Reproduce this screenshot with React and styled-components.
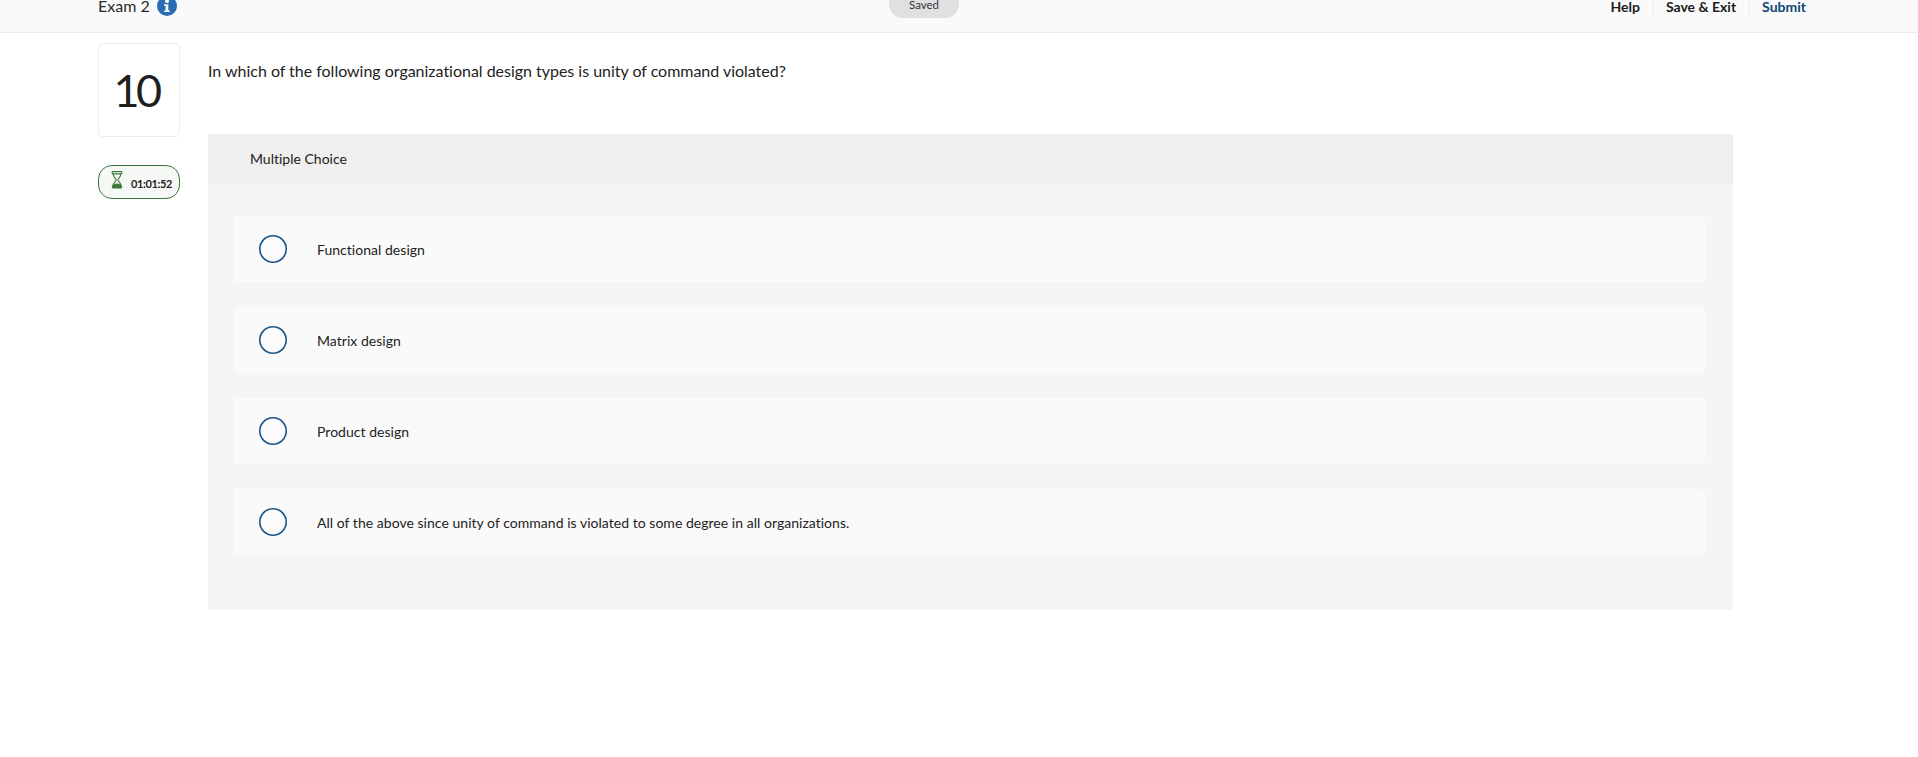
import styled, { createGlobalStyle } from "styled-components";

const GlobalStyle = createGlobalStyle`
  html, body {
    margin: 0;
    padding: 0;
    background: #fff;
    overflow: hidden;
  }
  body {
    font-family: "Lato", "Liberation Sans", sans-serif;
    font-variant-ligatures: none;
    color: #1f1f1f;
  }
`;

const choices = [
  "Functional design",
  "Matrix design",
  "Product design",
  "All of the above since unity of command is violated to some degree in all organizations.",
];

const InfoIcon = () => (
  <svg width="20" height="20" viewBox="0 0 20 20">
    <circle cx="10" cy="10" r="10" fill="#2a6db5" />
    <circle cx="10" cy="5.2" r="1.9" fill="#fff" />
    <path d="M7.2 8.2h4.1v6.2h1.4v1.7H7.2v-1.7h1.4V9.9H7.2z" fill="#fff" />
  </svg>
);

const HourglassIcon = () => (
  <svg width="12" height="18" viewBox="0 0 12 18" fill="none">
    <path
      d="M1.2 1.2c0-.4.2-.6.6-.6h8.4c.4 0 .6.2.6.6v1.1c0 .4-.2.6-.6.6H1.800c-.4 0-.6-.2-.6-.6z"
      stroke="#3a7a3a"
      strokeWidth="1.1"
    />
    <path
      d="M2.2 3c0 3.2 2.900 4.400 2.900 6s-3.400 3-3.400 6.600M9.800 3c0 3.200-2.900 4.400-2.900 6s3.400 3 3.400 6.600"
      stroke="#3a7a3a"
      strokeWidth="1.1"
    />
    <path
      d="M.8 15.600c.6-1.700 3-3.100 5.200-3.100s4.600 1.400 5.200 3.100c.2.900-.2 1.800-1.200 1.800H2c-1 0-1.400-.9-1.200-1.800z"
      fill="#3a7a3a"
    />
  </svg>
);

export default function App() {
  return (
    <>
      <GlobalStyle />
      <Header>
        <ExamTitle>
          <ExamName>Exam 2</ExamName>
          <InfoIcon />
        </ExamTitle>
        <SavedPill>Saved</SavedPill>
        <HeaderLinks>
          <HeaderLink>Help</HeaderLink>
          <HeaderLink>Save &amp; Exit</HeaderLink>
          <HeaderLink $primary>Submit</HeaderLink>
        </HeaderLinks>
      </Header>

      <Main>
        <Sidebar>
          <NumberBox>10</NumberBox>
          <Timer>
            <HourglassIcon />
            <TimerText>01:01:52</TimerText>
          </Timer>
        </Sidebar>

        <Content>
          <Question>
            In which of the following organizational design types is unity of command violated?
          </Question>
          <Panel>
            <PanelHead>Multiple Choice</PanelHead>
            <Choices>
              {choices.map((text) => (
                <Choice key={text}>
                  <Radio />
                  <span>{text}</span>
                </Choice>
              ))}
            </Choices>
          </Panel>
        </Content>
      </Main>
    </>
  );
}

const Header = styled.header`
  position: relative;
  margin-top: -20px;
  height: 52px;
  padding: 0 99px 0 98px;
  display: flex;
  justify-content: space-between;
  background: #fafafa;
  border-bottom: 1px solid #ececec;
`;

const ExamTitle = styled.div`
  display: flex;
  align-items: center;
  gap: 7px;
  height: 52px;
`;

const ExamName = styled.span`
  margin-bottom: 2px;
  font-size: 16px;
  color: #2a2a2a;
`;

const SavedPill = styled.div`
  position: absolute;
  left: 889px;
  top: 0;
  width: 70px;
  height: 38px;
  padding-top: 13px;
  box-sizing: border-box;
  border-radius: 0 0 14px 14px;
  background: #e0dfe1;
  font-size: 11.5px;
  line-height: 24px;
  text-align: center;
  color: #333;
`;

const HeaderLinks = styled.nav`
  display: flex;
  align-items: flex-start;
  padding-top: 16px;
`;

const HeaderLink = styled.a`
  height: 21px;
  padding: 0 13px 0 12px;
  font-size: 14px;
  line-height: 21px;
  font-weight: 700;
  color: ${(props) => (props.$primary ? "#0f4577" : "#1c1c1c")};
  border-left: 1px solid #eeeeee;

  &:first-child {
    border-left: none;
  }
`;

const Main = styled.main`
  display: flex;
  gap: 28px;
  padding: 10px 0 0 98px;
`;

const Sidebar = styled.aside`
  width: 82px;
  display: flex;
  flex-direction: column;
  gap: 28px;
`;

const NumberBox = styled.div`
  height: 94px;
  box-sizing: border-box;
  display: flex;
  align-items: center;
  justify-content: center;
  border: 1px solid #ececec;
  border-radius: 5px;
  font-size: 45px;
  letter-spacing: -3.5px;
  padding-right: 6px;
  color: #1f1f1f;
`;

const Timer = styled.div`
  height: 34px;
  box-sizing: border-box;
  display: flex;
  align-items: flex-start;
  gap: 8px;
  padding: 5px 0 0 12px;
  border: 1px solid #3a753a;
  border-radius: 14px;
  background: #f6f8f6;
`;

const TimerText = styled.span`
  margin-top: 6px;
  font-size: 11px;
  line-height: 14px;
  letter-spacing: -0.35px;
  font-weight: 700;
  color: #222;
`;

const Content = styled.section`
  width: 1525px;
`;

const Question = styled.p`
  margin: 0;
  height: 91px;
  padding-top: 18px;
  box-sizing: border-box;
  font-size: 16px;
  line-height: 20px;
  letter-spacing: -0.02px;
  color: #222;
`;

const Panel = styled.div`
  background: #f5f5f5;
  border-radius: 2px;
  overflow: hidden;
`;

const PanelHead = styled.div`
  height: 50px;
  padding-left: 42px;
  background: #efefef;
  font-size: 14px;
  line-height: 50px;
  color: #222;
`;

const Choices = styled.div`
  display: flex;
  flex-direction: column;
  gap: 25px;
  padding: 32px 28px 55px 26px;
`;

const Choice = styled.div`
  height: 66px;
  display: flex;
  align-items: center;
  gap: 30px;
  padding-left: 25px;
  background: #fafafa;
  border-radius: 4px;
  font-size: 14px;
  letter-spacing: 0.03px;
  color: #222;
`;

const Radio = styled.div`
  width: 28px;
  height: 28px;
  border-radius: 50%;
  background: #fbfbfb;
  box-shadow: inset 0 0 0 1.6px #1a5488;
`;
